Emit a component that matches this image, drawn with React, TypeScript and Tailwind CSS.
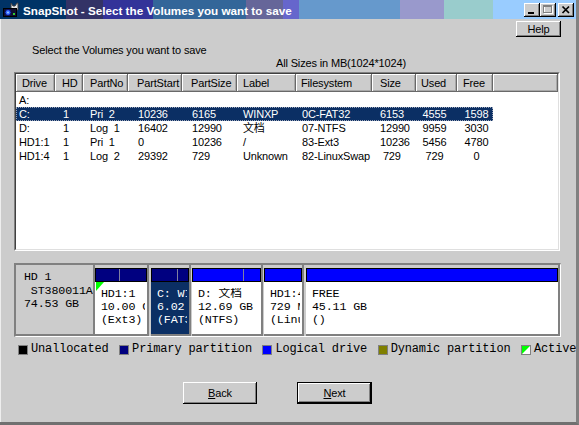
import React from 'react';

const SANS = "font-['Liberation_Sans','Noto_Sans_CJK_SC',sans-serif] text-[11px] tracking-[-0.15px]";
const MONO = "font-['Liberation_Mono','Noto_Sans_CJK_SC',monospace] text-[11.7px]";
const RAISED = 'shadow-[inset_-1px_-1px_0_#000,inset_1px_1px_0_#fff,inset_-2px_-2px_0_#808080]';
const HEADER = 'h-[18px] leading-[18px] bg-[#cccccc] shadow-[inset_-1px_-1px_0_#696969,inset_1px_1px_0_#fff,inset_-2px_-2px_0_#a8a8a8]';

const cols = [
  { title: 'Drive', w: 'w-[39px]', hp: 'pl-[6px]', dp: 'pl-[3px]' },
  { title: 'HD', w: 'w-[28px]', hp: 'pl-[7px]', dp: 'pl-[8px]' },
  { title: 'PartNo', w: 'w-[45px]', hp: 'pl-[7px]', dp: 'pl-[7px]' },
  { title: 'PartStart', w: 'w-[54px]', hp: 'pl-[9px]', dp: 'pl-[10px]' },
  { title: 'PartSize', w: 'w-[55px]', hp: 'pl-[9px]', dp: 'pl-[10px]' },
  { title: 'Label', w: 'w-[59px]', hp: 'pl-[6px]', dp: 'pl-[6px]' },
  { title: 'Filesystem', w: 'w-[76px]', hp: 'pl-[5px]', dp: 'pl-[6px]' },
  { title: 'Size', w: 'w-[44px]', hp: 'pl-[8px]', dp: 'pl-[8px]' },
  { title: 'Used', w: 'w-[41px]', hp: 'pl-[5px]', dp: 'pl-[6px]', center: true },
  { title: 'Free', w: 'w-[36px]', hp: 'pl-[6px]', dp: 'pl-[7px]', center: true },
];

const rows = [
  { cells: ['A:'] },
  { cells: ['C:', '1', 'Pri  2', '10236', '6165', 'WINXP', '0C-FAT32', '6153', '4555', '1598'], selected: true },
  { cells: ['D:', '1', 'Log  1', '16402', '12990', '文档', '07-NTFS', '12990', '9959', '3030'] },
  { cells: ['HD1:1', '1', 'Pri  1', '0', '10236', '/', '83-Ext3', '10236', '5456', '4780'] },
  { cells: ['HD1:4', '1', 'Log  2', '29392', '729', 'Unknown', '82-LinuxSwap', ' 729', '729', '0'] },
];

const parts = [
  { w: 'w-[54px]', ml: '', bar: 'bg-[#000080]', used: 'w-[24px]', lines: ['HD1:1', '10.00 GB', '(Ext3)'], active: true },
  { w: 'w-[40px]', ml: 'ml-[2px]', bar: 'bg-[#000080]', used: 'w-[26px]', lines: ['C: WINXP', '6.02 GB', '(FAT32)'], selected: true },
  { w: 'w-[71px]', ml: 'ml-[1px]', bar: 'bg-[#0000ff]', used: 'w-[51px]', lines: ['D: 文档', '12.69 GB', '(NTFS)'] },
  { w: 'w-[40px]', ml: 'ml-[1px]', bar: 'bg-[#0000ff]', used: '', lines: ['HD1:4', '729 MB', '(LinuxSwap)'] },
  { w: 'flex-1', ml: 'ml-[2px]', bar: 'bg-[#0000ff]', used: '', lines: ['FREE', '45.11 GB', '()'] },
];

const legend = [
  { label: 'Unallocated', fill: 'bg-black' },
  { label: 'Primary partition', fill: 'bg-[#000080]' },
  { label: 'Logical drive', fill: 'bg-[#0000ff]' },
  { label: 'Dynamic partition', fill: 'bg-[#808000]' },
  { label: 'Active', fill: 'bg-white', active: true },
];

function TitleBar() {
  return (
    <div className="h-[19px] flex items-start overflow-hidden bg-[linear-gradient(to_right,#003366_0px,#003366_66px,#333366_66px,#333366_103px,#333399_103px,#333399_153px,#336699_153px,#336699_246px,#666699_246px,#666699_283px,#6666cc_283px,#6666cc_299px,#6699cc_299px,#6699cc_400px,#9999cc_400px,#9999cc_444px,#99cccc_444px,#99cccc_493px,#99ccff_493px,#99ccff_100%)]">
      <svg width="16" height="16" viewBox="0 0 16 16" className="ml-[3px] mt-[2px] shrink-0">
        <path d="M8 1 L10 4 L12 4 L14 1 L15 1 L15 8 L8 8 Z" fill="#e8e8e8" stroke="#404040" strokeWidth="1" />
        <rect x="0.5" y="6.5" width="13" height="8" fill="#101030" stroke="#000" />
        <circle cx="5" cy="10.5" r="3" fill="#3366ff" stroke="#0a0a60" />
        <circle cx="5" cy="10.5" r="1" fill="#99ccff" />
        <rect x="10" y="11" width="2" height="2" fill="#33cc33" />
      </svg>
      <span className="ml-[4px] pt-[1px] leading-[19px] text-white font-bold text-[11.7px] font-['Liberation_Sans',sans-serif] whitespace-nowrap">
        SnapShot - Select the Volumes you want to save
      </span>
      <div className="ml-auto mr-[2px] mt-[3px] flex">
        <div className={`w-[16px] h-[14px] bg-[#cccccc] ${RAISED}`}>
          <svg width="16" height="14"><rect x="4" y="9" width="6" height="2" fill="#000" /></svg>
        </div>
        <div className={`w-[16px] h-[14px] bg-[#cccccc] ${RAISED}`}>
          <svg width="16" height="14">
            <rect x="4.5" y="3.5" width="8" height="7" fill="none" stroke="#fff" />
            <rect x="3.5" y="2.5" width="8" height="7" fill="none" stroke="#808080" />
            <rect x="3" y="3" width="9" height="1" fill="#808080" />
          </svg>
        </div>
        <div className={`ml-[2px] w-[16px] h-[14px] bg-[#cccccc] ${RAISED}`}>
          <svg width="16" height="14">
            <path d="M4.5 3.5 L11 10 M11 3.5 L4.5 10" stroke="#000" strokeWidth="1.7" />
          </svg>
        </div>
      </div>
    </div>
  );
}

function VolumeList() {
  return (
    <div className="ml-[13px] mt-[2px] w-[546px] h-[179px] border border-t-[#808080] border-l-[#808080] border-r-white border-b-white">
      <div className="w-full h-full border border-t-[#404040] border-l-[#404040] border-r-[#dfdfdf] border-b-[#dfdfdf] bg-white overflow-hidden">
        <div className="flex">
          {cols.map((c) => (
            <div key={c.title} className={`${c.w} ${c.hp} ${HEADER} shrink-0 whitespace-nowrap overflow-hidden`}>
              {c.title}
            </div>
          ))}
          <div className={`flex-1 ${HEADER}`} />
        </div>
        <div className="pt-[1px]">
          {rows.map((r) => (
            <div
              key={r.cells[0]}
              className={`flex w-fit h-[14px] leading-[14px] ${r.selected ? 'bg-[#0b2f64] text-white outline-1 outline-dotted outline-[#9aa4b8] -outline-offset-1' : 'text-black'}`}
            >
              {cols.map((c, i) => (
                <div key={c.title} className={`${c.w} ${c.dp} shrink-0 whitespace-pre overflow-hidden`}>
                  {c.center ? (
                    <span className="inline-block w-[25px] text-center">{r.cells[i] ?? ''}</span>
                  ) : (
                    r.cells[i] ?? ''
                  )}
                </div>
              ))}
            </div>
          ))}
        </div>
      </div>
    </div>
  );
}

function DiskMap() {
  return (
    <div className="ml-[13px] mt-[12px] w-[547px] h-[74px] flex border-t-2 border-l-2 border-t-[#808080] border-l-[#808080] border-r border-b border-r-white border-b-white">
      <div className={`w-[79px] shrink-0 h-full border-r-2 border-b-2 border-[#808080] pl-[8px] pt-[6px] leading-[13.5px] ${MONO} whitespace-pre overflow-hidden`}>
        <div>HD 1</div>
        <div> ST380011AS</div>
        <div>74.53 GB</div>
      </div>
      {parts.map((p) => (
        <div key={p.lines[0]} className={`${p.w} ${p.ml} shrink-0 h-full flex flex-col border-r-2 border-b-2 border-[#808080] min-w-0`}>
          <div className="h-[3px] shrink-0" />
          <div className={`h-[14px] shrink-0 border border-black ${p.bar} flex`}>
            {p.used && <div className={`${p.used} h-full border-r border-r-[#8080a0]`} />}
          </div>
          <div
            className={`relative flex-1 pl-[6px] pr-[2px] pt-[6px] ${MONO} leading-[13px] ${p.selected ? 'bg-[#0b2f64] text-white' : 'bg-white text-black'}`}
          >
            {p.active && (
              <svg width="8" height="9" className="absolute left-[1px] top-0">
                <polygon points="0,0 8,0 0,9" fill="#00ff00" />
              </svg>
            )}
            <div className="overflow-hidden whitespace-pre">
              {p.lines.map((l) => (
                <div key={l}>{l}</div>
              ))}
            </div>
          </div>
        </div>
      ))}
    </div>
  );
}

function Legend() {
  return (
    <div className="flex items-center gap-[10.5px] mt-[6px] pl-[17px] h-[13px] leading-[13px] font-['Liberation_Mono',monospace] text-[12px] whitespace-pre">
      {legend.map((l) => (
        <div key={l.label} className="flex items-center gap-[3px]">
          <div className={`w-[10px] h-[10px] border border-[#808080] ${l.fill} relative overflow-hidden shrink-0`}>
            {l.active && (
              <svg width="8" height="8" className="absolute left-0 top-0">
                <polygon points="0,0 8,0 0,8" fill="#00ff00" />
              </svg>
            )}
          </div>
          <span>{l.label}</span>
        </div>
      ))}
    </div>
  );
}

export default function App() {
  return (
    <div className="w-[579px] h-[425px] flex flex-col bg-[#cccccc] border-r-[3px] border-b-[3px] border-r-[#808080] border-b-[#707070] overflow-hidden">
      <TitleBar />
      <div className={`flex-1 flex flex-col border-l border-l-[#eeeeee] ${SANS} text-black overflow-hidden`}>
        <div className="flex justify-end pr-[15px] mt-[2px]">
          <button className={`w-[45px] h-[16px] bg-[#cccccc] ${RAISED} leading-[16px] text-center`}>Help</button>
        </div>
        <div className="mt-[7px] pl-[31px] h-[13px] leading-[13px]">Select the Volumes you want to save</div>
        <div className="pl-[275px] h-[13px] leading-[13px]">All Sizes in MB(1024*1024)</div>
        <VolumeList />
        <DiskMap />
        <Legend />
        <div className="flex mt-[26px] pl-[182px]">
          <button className={`w-[74px] h-[22px] bg-[#cccccc] ${RAISED} text-center`}>
            <span className="underline">B</span>ack
          </button>
          <button className={`ml-[40px] w-[75px] h-[22px] bg-[#cccccc] border border-black ${RAISED} text-center`}>
            <span className="underline">N</span>ext
          </button>
        </div>
      </div>
    </div>
  );
}
